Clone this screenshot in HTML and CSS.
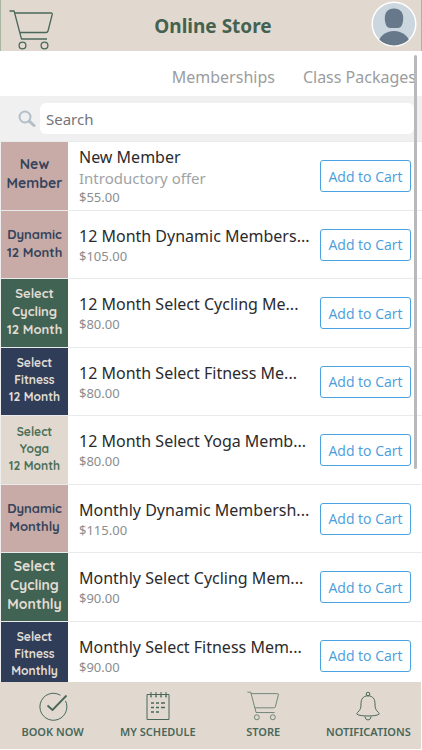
FILE: index.html
```html
<!DOCTYPE html>
<html lang="en">
<head>
<meta charset="utf-8">
<meta name="viewport" content="width=device-width, initial-scale=1">
<title>Online Store</title>
<link rel="stylesheet" href="styles.css">
</head>
<body>
<svg class="defs" aria-hidden="true">
  <symbol id="cart" viewBox="0 0 44 40">
    <path d="M.5 1h4.6L12.500 29H38M5.800 3h36.200q1.500 0 1.200 1.500L39 21q-.4 1.500-2 1.500H11"/>
    <circle cx="13.500" cy="35.500" r="3.400"/><circle cx="35.500" cy="35.500" r="3.400"/>
  </symbol>
</svg>
<div class="app">
  <header class="header">
    <a class="cart" href="#cart" aria-label="Cart"><svg class="line"><use href="#cart"/></svg></a>
    <h1>Online Store</h1>
    <a class="avatar" href="#profile" aria-label="Profile">
      <svg viewBox="0 0 46 46">
        <defs><clipPath id="face"><circle cx="23" cy="23" r="21.500"/></clipPath></defs>
        <circle cx="23" cy="23" r="21.800" fill="#ccd6de" stroke="#fff" stroke-width="1.500"/>
        <g fill="#667889" clip-path="url(#face)"><path d="M23 7.500c6 0 9.200 4 9.200 9.500 0 6-2 10-5.200 10h-8c-3.200 0-5.200-4-5.200-10 0-5.500 3.200-9.500 9.200-9.500z"/><ellipse cx="23" cy="43" rx="15.500" ry="13"/></g>
      </svg>
    </a>
  </header>
  <nav class="tabs">
    <a href="#memberships">Memberships</a>
    <a href="#packages">Class Packages</a>
  </nav>
  <form class="search">
    <label for="q" aria-label="Search"><svg viewBox="0 0 18 18"><circle cx="7" cy="7" r="5.500"/><path d="M11.200 11.200l4.800 4.300" stroke-width="3"/></svg></label>
    <input id="q" type="search" placeholder="Search">
  </form>
  <main class="content">
    <ul class="list">
      <li class="row">
        <div class="thumb rose large">New<br>Member</div>
        <div class="info"><h2>New Member</h2><p class="note">Introductory offer</p><p class="price">$55.00</p></div>
        <button type="button">Add to Cart</button>
      </li>
      <li class="row">
        <div class="thumb rose">Dynamic<br>12 Month</div>
        <div class="info"><h2>12 Month Dynamic Members...</h2><p class="price">$105.00</p></div>
        <button type="button">Add to Cart</button>
      </li>
      <li class="row">
        <div class="thumb green">Select<br>Cycling<br>12 Month</div>
        <div class="info"><h2>12 Month Select Cycling Me...</h2><p class="price">$80.00</p></div>
        <button type="button">Add to Cart</button>
      </li>
      <li class="row">
        <div class="thumb navy small">Select<br>Fitness<br>12 Month</div>
        <div class="info"><h2>12 Month Select Fitness Me...</h2><p class="price">$80.00</p></div>
        <button type="button">Add to Cart</button>
      </li>
      <li class="row">
        <div class="thumb sand small">Select<br>Yoga<br>12 Month</div>
        <div class="info"><h2>12 Month Select Yoga Memb...</h2><p class="price">$80.00</p></div>
        <button type="button">Add to Cart</button>
      </li>
      <li class="row">
        <div class="thumb rose">Dynamic<br>Monthly</div>
        <div class="info"><h2>Monthly Dynamic Membersh...</h2><p class="price">$115.00</p></div>
        <button type="button">Add to Cart</button>
      </li>
      <li class="row">
        <div class="thumb green large">Select<br>Cycling<br>Monthly</div>
        <div class="info"><h2>Monthly Select Cycling Mem...</h2><p class="price">$90.00</p></div>
        <button type="button">Add to Cart</button>
      </li>
      <li class="row">
        <div class="thumb navy small">Select<br>Fitness<br>Monthly</div>
        <div class="info"><h2>Monthly Select Fitness Mem...</h2><p class="price">$90.00</p></div>
        <button type="button">Add to Cart</button>
      </li>
    </ul>
  </main>
  <nav class="bottom">
    <a href="#book"><svg class="line" viewBox="0 0 30 30"><path d="M22.500 4.300A13.500 13.500 0 1 0 27.500 9.800"/><path d="M9.500 14.500l5 4.500L28.500 4.500" stroke-width="1.800"/></svg>BOOK NOW</a>
    <a href="#schedule"><svg class="line" viewBox="0 0 30 30"><path d="M4 3.500h22v25H4zM8 1v5M13 1v5M18 1v5M23 1v5"/><path d="M8 12h3m2 0h3m2 0h4M8 16.500h3m2 0h3m2 0h4M8 21h3m2 0h3" stroke-width="1.500"/><path d="M7.500 5.500h1M12.500 5.500h1M17.500 5.500h1M22.500 5.500h1" stroke-width="2"/></svg>MY SCHEDULE</a>
    <a href="#store"><svg class="line cart-small"><use href="#cart"/></svg>STORE</a>
    <a href="#notifications"><svg class="line" viewBox="0 0 30 30"><circle cx="15" cy="3" r="1.800"/><path d="M15 4.800c-5 0-7 3.500-7 8 0 4-.5 6-3 8.200-1 .9-1.500 1.600-1 2.200 3 2.400 19 2.400 22 0 .5-.6 0-1.300-1-2.200-2.500-2.200-3-4.200-3-8.200 0-4.500-2-8-7-8zM12 25.500c0 4.500 6 4.500 6 0"/></svg>NOTIFICATIONS</a>
  </nav>
  <div class="scrollbar"></div>
</div>
</body>
</html>
```
FILE: styles.css
```css
* { box-sizing: border-box; }
body { margin: 0; background: #fff; font-family: "Noto Sans", "Open Sans", sans-serif; color: #2b2b2d; }
h1, h2, p, ul { margin: 0; padding: 0; }
a { color: inherit; text-decoration: none; }
svg { display: block; }
.defs { position: absolute; width: 0; height: 0; }
.line { fill: none; stroke: #49685a; stroke-width: 1.300; stroke-linejoin: round; }

.app { position: relative; display: flex; flex-direction: column; height: 100vh; overflow: hidden; }

.header {
  flex: none;
  display: grid;
  grid-template-columns: 1fr auto 1fr;
  align-items: center;
  height: 51px;
  padding: 0 4px 0 8px;
  background: #e1d9d0;
  border: solid #a9b7a1;
  border-width: 0 1px;
}
.cart svg { width: 44px; height: 40px; margin-top: 8px; }
.header h1 { font-size: 19px; line-height: 28px; font-weight: 700; color: #44624f; }
.avatar { justify-self: end; }
.avatar svg { width: 46px; height: 46px; margin-bottom: 4px; }

.tabs { flex: none; display: flex; justify-content: flex-end; gap: 28px; height: 45px; padding: 3px 6px 0 0; font-size: 16px; line-height: 46px; color: #9b9da0; white-space: nowrap; }

.search { flex: none; display: flex; align-items: center; height: 45px; padding: 0 8px 0 18px; background: #f0f0f1; }
.search svg { width: 18px; height: 18px; fill: none; stroke: #b3bfc7; stroke-width: 2; stroke-linecap: round; }
.search input { flex: 1; min-width: 0; height: 31px; margin-left: 4px; padding: 0 6px; border: 0; border-radius: 6px; background: #fff; font: 15px "Noto Sans", sans-serif; color: #333; appearance: none; }
.search input::placeholder { color: #747477; opacity: 1; }

.content { flex: 1; min-height: 0; overflow: hidden; }
.list { display: grid; grid-auto-rows: 69px 68px; list-style: none; }
.row { display: flex; align-items: center; min-width: 0; padding-right: 11px; border-top: 1px solid #e9eaec; }
.thumb { flex: none; display: flex; align-items: center; justify-content: center; align-self: stretch; width: 68px; padding-bottom: 4px; border-left: 1px solid #eee; font-family: Quicksand, Lato, sans-serif; font-size: 13px; line-height: 18px; font-weight: 700; text-align: center; }
.thumb.large { font-size: 14px; line-height: 19px; }
.thumb.small { font-size: 12px; line-height: 17px; }
.rose { background: #c8aba6; color: #35435c; }
.green { background: #416353; color: #e1ddd5; }
.navy { background: #2f3d58; color: #e1ddd5; }
.sand { background: #e1d9d0; color: #4b7058; }
.info { flex: 1; min-width: 0; padding-left: 11px; white-space: nowrap; }
.info h2 { font-size: 16px; line-height: 22px; font-weight: 400; }
.note { font-size: 15px; line-height: 20px; color: #a0a3a5; }
.price { font-size: 13px; line-height: 18px; color: #8b8d8f; }
.row button { flex: none; width: 91px; height: 32px; padding: 0; border: 1px solid #4aa3e0; border-radius: 3px; background: #fff; font: 14px "Open Sans", sans-serif; color: #4a9ddb; }

.bottom { flex: none; display: grid; grid-template-columns: repeat(4, 1fr); height: 67px; margin: 0 1px 1px 0; padding-top: 9px; background: #e1d9d0; color: #49685a; font-size: 11px; line-height: 16px; font-weight: 600; white-space: nowrap; }
.bottom a { display: flex; flex-direction: column; align-items: center; gap: 3px; }
.bottom svg { width: 30px; height: 30px; stroke-width: 1; }
.bottom .cart-small { width: 32px; }

.scrollbar { position: absolute; top: 55px; right: 5px; width: 3px; height: 414px; border-radius: 2px; background: #b9b9bb; }
```
